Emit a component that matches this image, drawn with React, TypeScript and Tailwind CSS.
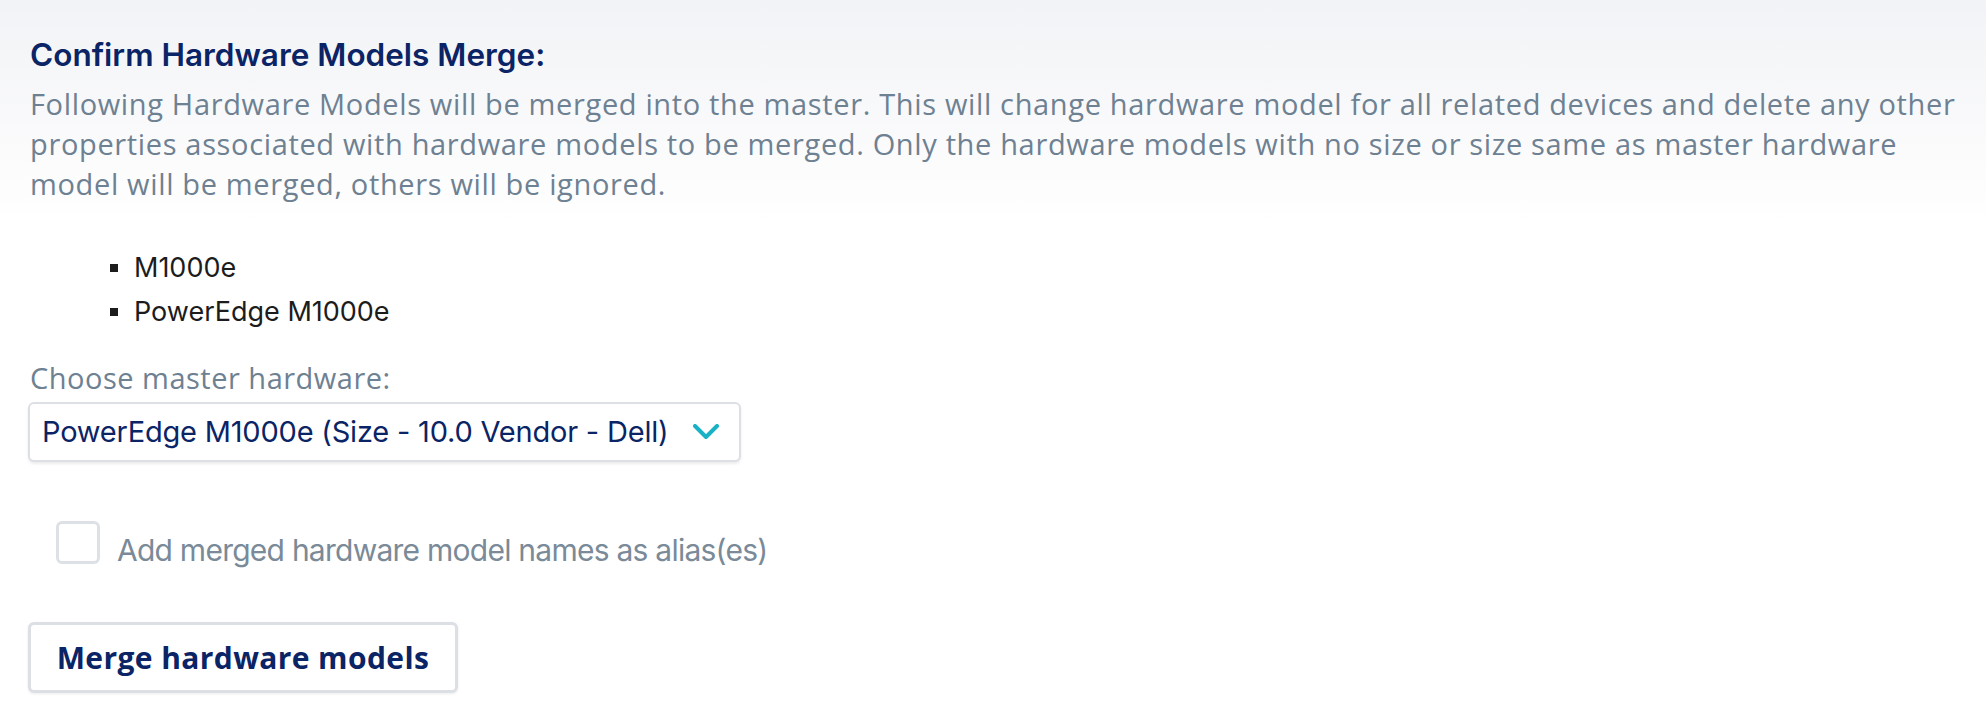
import React, { useState } from 'react';

const models = ['M1000e', 'PowerEdge M1000e'];

const App: React.FC = () => {
  const [addAlias, setAddAlias] = useState(false);

  return (
    <div className="min-h-screen w-full bg-white">
      {/* Header with soft gradient */}
      <div className="bg-gradient-to-b from-[#f2f3f6] to-white pl-[30px] pr-[20px] pt-[37px] pb-[22px]">
        <h2 className="font-['Inter',sans-serif] text-[31.5px] leading-[36px] font-semibold text-[#0b2465]">
          Confirm Hardware Models Merge:
        </h2>
        <p className="mt-[11px] whitespace-nowrap font-['Open_Sans',sans-serif] text-[29px] leading-[40px] tracking-[0.65px] text-[#6e8192]">
          Following Hardware Models will be merged into the master. This will change hardware model for all related devices and delete any other
          <br />
          properties associated with hardware models to be merged. Only the hardware models with no size or size same as master hardware
          <br />
          model will be merged, others will be ignored.
        </p>
      </div>

      <div className="pl-[28px] pt-[20px]">
        <ul className="font-['Inter',sans-serif] text-[27px] leading-[44px] text-[#1c1c1c]">
          {models.map(m => (
            <li key={m} className="flex items-center">
              <span className="ml-[82px] mr-[16px] h-[8px] w-[8px] bg-[#1c1c1c]" />
              {m}
            </li>
          ))}
        </ul>

        <label className="mt-[24px] block pl-[2px] font-['Open_Sans',sans-serif] text-[29px] leading-[40px] tracking-[0.5px] text-[#6e8192]">
          Choose master hardware:
        </label>

        <div className="mt-[4px] flex h-[60px] w-[713px] items-center justify-between rounded-[6px] border-2 border-[#dcdfe3] bg-white pl-[12px] pr-[20px] shadow-[0_2px_3px_rgba(0,0,0,0.08)]">
          <span className="font-['Inter',sans-serif] text-[29px] tracking-[-0.2px] text-[#0b2465]">
            PowerEdge M1000e (Size - 10.0 Vendor - Dell)
          </span>
          <svg width="26" height="16" viewBox="0 0 26 16" fill="none">
            <path d="M2 2 L13 13 L24 2" stroke="#19b2c4" strokeWidth="4" strokeLinecap="round" strokeLinejoin="round" />
          </svg>
        </div>

        <div className="mt-[59px] flex items-start pl-[28px]">
          <button
            onClick={() => setAddAlias(!addAlias)}
            className="h-[43px] w-[44px] flex-shrink-0 rounded-[6px] border-[3px] border-[#dde1e6] bg-white"
          />
          <span className="ml-[17px] mt-[7px] font-['Inter',sans-serif] text-[30px] leading-[44px] tracking-[-0.75px] text-[#7a8a98]">
            Add merged hardware model names as alias(es)
          </span>
        </div>

        <button className="mt-[50px] flex h-[71px] w-[430px] items-center justify-center rounded-[6px] border-[3px] border-[#dcdfe3] bg-white shadow-[0_1px_3px_rgba(0,0,0,0.08)]">
          <span className="font-['Open_Sans',sans-serif] text-[30px] font-bold tracking-[0.4px] text-[#0b2465]">
            Merge hardware models
          </span>
        </button>
      </div>
    </div>
  );
};

export default App;
